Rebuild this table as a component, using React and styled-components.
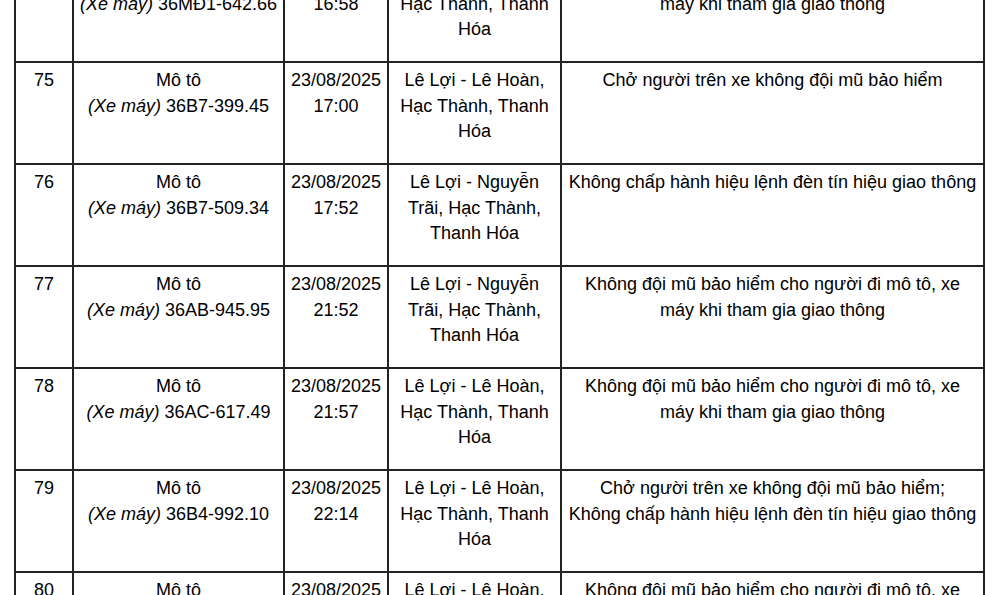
import { createGlobalStyle } from 'styled-components';
import styled from 'styled-components';

const GlobalStyle = createGlobalStyle`
    html, body {
        margin: 0;
        padding: 0;
        background: #fff;
        overflow: hidden;
    }
`;

const Page = styled.div`
    width: 992px;
    height: 595px;
    overflow: hidden;
    background: #fff;
`;

// the page is scrolled into the middle of the list
const Scroller = styled.div`
    margin-top: -41px;
    padding-left: 14px;
`;

const Table = styled.table`
    border-collapse: collapse;
    table-layout: fixed;
    width: 971px;
    font-family: "Liberation Sans", Arial, sans-serif;
    font-size: 18px;
    line-height: 25.6px;
    color: #000;
`;

const Row = styled.tr`
    height: 102px;
`;

const Cell = styled.td`
    border: 2px solid #222;
    padding: 5px 5px 0;
    vertical-align: top;
    text-align: center;
    overflow: hidden;
`;

const Kind = styled.i`
    font-style: italic;
`;

const rows = [
    { no: 74, plate: '36MĐ1-642.66', time: '16:58', place: 'Lê Lợi - Lê Hoàn, Hạc Thành, Thanh Hóa', fault: ['Không đội mũ bảo hiểm cho người đi mô tô, xe máy khi tham gia giao thông'] },
    { no: 75, plate: '36B7-399.45', time: '17:00', place: 'Lê Lợi - Lê Hoàn, Hạc Thành, Thanh Hóa', fault: ['Chở người trên xe không đội mũ bảo hiểm'] },
    { no: 76, plate: '36B7-509.34', time: '17:52', place: 'Lê Lợi - Nguyễn Trãi, Hạc Thành, Thanh Hóa', fault: ['Không chấp hành hiệu lệnh đèn tín hiệu giao thông'] },
    { no: 77, plate: '36AB-945.95', time: '21:52', place: 'Lê Lợi - Nguyễn Trãi, Hạc Thành, Thanh Hóa', fault: ['Không đội mũ bảo hiểm cho người đi mô tô, xe máy khi tham gia giao thông'] },
    { no: 78, plate: '36AC-617.49', time: '21:57', place: 'Lê Lợi - Lê Hoàn, Hạc Thành, Thanh Hóa', fault: ['Không đội mũ bảo hiểm cho người đi mô tô, xe máy khi tham gia giao thông'] },
    { no: 79, plate: '36B4-992.10', time: '22:14', place: 'Lê Lợi - Lê Hoàn, Hạc Thành, Thanh Hóa', fault: ['Chở người trên xe không đội mũ bảo hiểm;', 'Không chấp hành hiệu lệnh đèn tín hiệu giao thông'] },
    { no: 80, plate: '36B8-214.07', time: '22:31', place: 'Lê Lợi - Lê Hoàn, Hạc Thành, Thanh Hóa', fault: ['Không đội mũ bảo hiểm cho người đi mô tô, xe máy khi tham gia giao thông'] },
];

export default function App(){
    return (
        <Page>
            <GlobalStyle />
            <Scroller>
                <Table>
                    <colgroup>
                        <col style={{ width: 58 }} />
                        <col style={{ width: 211 }} />
                        <col style={{ width: 104 }} />
                        <col style={{ width: 173 }} />
                        <col style={{ width: 423 }} />
                    </colgroup>
                    <tbody>
                        { rows.map((row) => (
                            <Row key={row.no}>
                                <Cell>{row.no}</Cell>
                                <Cell>
                                    Mô tô<br />
                                    <Kind>(Xe máy)</Kind> {row.plate}
                                </Cell>
                                <Cell>
                                    23/08/2025<br />
                                    {row.time}
                                </Cell>
                                <Cell>{row.place}</Cell>
                                <Cell>
                                    { row.fault.map((line, i) => (
                                        <span key={i}>{i > 0 && <br />}{line}</span>
                                    )) }
                                </Cell>
                            </Row>
                        )) }
                    </tbody>
                </Table>
            </Scroller>
        </Page>
    );
}
